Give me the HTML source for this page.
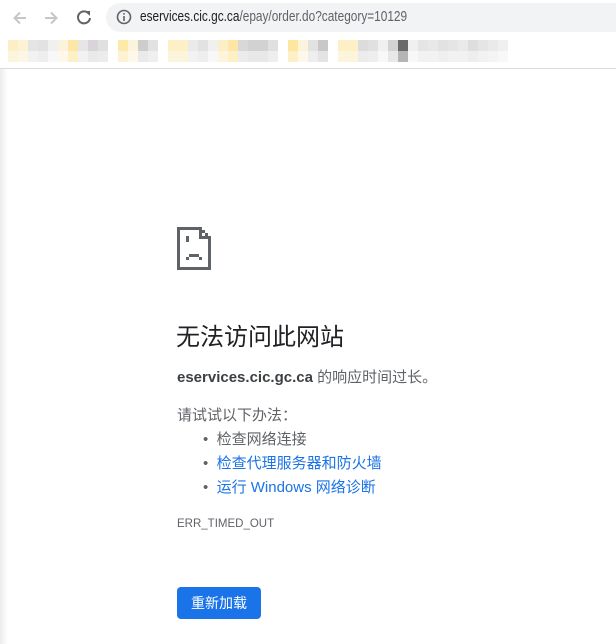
<!DOCTYPE html>
<html><head><meta charset="utf-8"><style>
body{margin:0;width:616px;height:644px;background:#fff;position:relative;overflow:hidden;font-family:"Liberation Sans","Noto Sans CJK SC",sans-serif;color:#202124}
.a{position:absolute;white-space:nowrap}
.bar{position:absolute;left:0;top:0;width:616px;height:68px;background:#fff;border-bottom:1px solid #dadce0}
.url{position:absolute;left:106px;top:3px;width:530px;height:29px;border-radius:15px;background:#f1f3f4}
.r{position:absolute;left:8px;display:flex;height:11px}
.r i{display:block;width:10px;height:11px}
</style></head><body>
<div class="bar">
<div class="url"></div>
<svg class="a" style="left:10px;top:8px" width="20" height="20" viewBox="0 0 20 20"><path d="M16 10H5M10 4.5L4.5 10L10 15.5" stroke="#c4c7c9" stroke-width="2" fill="none"/></svg>
<svg class="a" style="left:41px;top:8px" width="20" height="20" viewBox="0 0 20 20"><path d="M4 10H15M10 4.5L15.5 10L10 15.5" stroke="#c4c7c9" stroke-width="2" fill="none"/></svg>
<svg class="a" style="left:74px;top:7px" width="20" height="20" viewBox="0 0 20 20"><path d="M15 7A6 6 0 1 0 16 11" stroke="#5f6368" stroke-width="2" fill="none"/><path d="M11 4h5v5z" fill="#5f6368"/></svg>
<svg class="a" style="left:116px;top:9px" width="16" height="16" viewBox="0 0 16 16"><circle cx="8" cy="8" r="6.5" stroke="#5f6368" stroke-width="1.6" fill="none"/><rect x="7.2" y="7" width="1.6" height="5" fill="#5f6368"/><rect x="7.2" y="4" width="1.6" height="1.6" fill="#5f6368"/></svg>
<div class="a" style="left:140px;top:8px;font-size:15px;color:#202124;transform:scaleX(.79);transform-origin:0 0">eservices.cic.gc.ca<span style="color:#5f6368">/epay/order.do?category=10129</span></div>
<div class="r" style="top:40px"><i style="background:#fcefc8"></i><i style="background:#fdf2d2"></i><i style="background:#e5e5e5"></i><i style="background:#e2e2e2"></i><i style="background:#f0f0f0"></i><i style="background:#fbf3dc"></i><i style="background:#fde6a6"></i><i style="background:#e6e6e6"></i><i style="background:#d9d4d9"></i><i style="background:#e0e0e0"></i><i style="background:#fff"></i><i style="background:#fde9a8"></i><i style="background:#fbf3dc"></i><i style="background:#cdcdcd"></i><i style="background:#e2e2e2"></i><i style="background:#fff"></i><i style="background:#fdefc6"></i><i style="background:#fdefc6"></i><i style="background:#eaeaea"></i><i style="background:#e2e2e2"></i><i style="background:#f0f0f0"></i><i style="background:#fcefc8"></i><i style="background:#fde6a6"></i><i style="background:#d8d8d8"></i><i style="background:#d2d2d2"></i><i style="background:#d2d2d2"></i><i style="background:#e0e0e0"></i><i style="background:#fff"></i><i style="background:#fde6a0"></i><i style="background:#fbf3dc"></i><i style="background:#e2e2e2"></i><i style="background:#c8c8c8"></i><i style="background:#fff"></i><i style="background:#fdefc6"></i><i style="background:#fdefc6"></i><i style="background:#dcdcdc"></i><i style="background:#e0e0e0"></i><i style="background:#f0f0f0"></i><i style="background:#d2d2d2"></i><i style="background:#6a6a6a"></i><i style="background:#f0f0f0"></i><i style="background:#e5e5e5"></i><i style="background:#e8e8e8"></i><i style="background:#e2e2e2"></i><i style="background:#e5e5e5"></i><i style="background:#eaeaea"></i><i style="background:#dedede"></i><i style="background:#e5e5e5"></i><i style="background:#eaeaea"></i><i style="background:#f0f0f0"></i></div>
<div class="r" style="top:51px"><i style="background:#fdf4dc"></i><i style="background:#fdf6e4"></i><i style="background:#f2f2f2"></i><i style="background:#eeeeee"></i><i style="background:#f8f8f8"></i><i style="background:#fdf8ea"></i><i style="background:#fdefc6"></i><i style="background:#f2f2f2"></i><i style="background:#eaeaea"></i><i style="background:#ececec"></i><i style="background:#fff"></i><i style="background:#fdf2d4"></i><i style="background:#fdf8ea"></i><i style="background:#eaeaea"></i><i style="background:#efefef"></i><i style="background:#fff"></i><i style="background:#fdf4dc"></i><i style="background:#fdf4dc"></i><i style="background:#f2f2f2"></i><i style="background:#eeeeee"></i><i style="background:#f8f8f8"></i><i style="background:#fdf4dc"></i><i style="background:#fdefc6"></i><i style="background:#ececec"></i><i style="background:#e8e8e8"></i><i style="background:#e8e8e8"></i><i style="background:#eeeeee"></i><i style="background:#fff"></i><i style="background:#fdefc6"></i><i style="background:#fdf8ea"></i><i style="background:#eeeeee"></i><i style="background:#e4e4e4"></i><i style="background:#fff"></i><i style="background:#fdf4dc"></i><i style="background:#fdf4dc"></i><i style="background:#ececec"></i><i style="background:#eeeeee"></i><i style="background:#f8f8f8"></i><i style="background:#e8e8e8"></i><i style="background:#b5b5b5"></i><i style="background:#f8f8f8"></i><i style="background:#f2f2f2"></i><i style="background:#f2f2f2"></i><i style="background:#efefef"></i><i style="background:#f2f2f2"></i><i style="background:#f2f2f2"></i><i style="background:#eeeeee"></i><i style="background:#f2f2f2"></i><i style="background:#f4f4f4"></i><i style="background:#f8f8f8"></i></div>
</div>
<div class="a" style="left:0;top:69px;width:8px;height:575px;background:linear-gradient(90deg,#ececec,#fff)"></div>
<svg class="a" style="left:177px;top:227px" width="34" height="43" viewBox="0 0 34 43" shape-rendering="crispEdges">
<path d="M0 0h22v3H3v37h28V12h3v31H0z" fill="#5f6368"/>
<path d="M22 0h3v3h3v3h3v3h3v3h-3V9h-3V6h-3V3h-3z" fill="#5f6368"/>
<rect x="22" y="3" width="3" height="9" fill="#5f6368"/><rect x="22" y="9" width="9" height="3" fill="#5f6368"/>
<rect x="9" y="9" width="3" height="6" fill="#5f6368"/>
<rect x="9" y="30" width="3" height="3" fill="#5f6368"/><rect x="12" y="27" width="10" height="3" fill="#5f6368"/><rect x="22" y="30" width="3" height="3" fill="#5f6368"/>
</svg>
<div class="a" style="left:176px;top:317px;font-size:24px;color:#202124">无法访问此网站</div>
<div class="a" style="left:177px;top:366px;font-size:15px;color:#5f6368"><b style="color:#3c4043">eservices.cic.gc.ca</b> 的响应时间过长。</div>
<div class="a" style="left:177px;top:404px;font-size:15px;color:#5f6368">请试试以下办法：</div>
<div class="a" style="left:203px;top:428px;font-size:15px;color:#5f6368">•&nbsp;&nbsp;检查网络连接</div>
<div class="a" style="left:203px;top:452px;font-size:15px;color:#5f6368">•&nbsp;&nbsp;<span style="color:#1a73e8">检查代理服务器和防火墙</span></div>
<div class="a" style="left:203px;top:476px;font-size:15px;color:#5f6368">•&nbsp;&nbsp;<span style="color:#1a73e8">运行 Windows 网络诊断</span></div>
<div class="a" style="left:177px;top:518px;font-size:11.5px;color:#5f6368">ERR_TIMED_OUT</div>
<div class="a" style="left:177px;top:587px;width:84px;height:32px;background:#1a73e8;border-radius:4px;color:#fff;font-size:14px;line-height:32px;text-align:center">重新加载</div>
</body></html>
